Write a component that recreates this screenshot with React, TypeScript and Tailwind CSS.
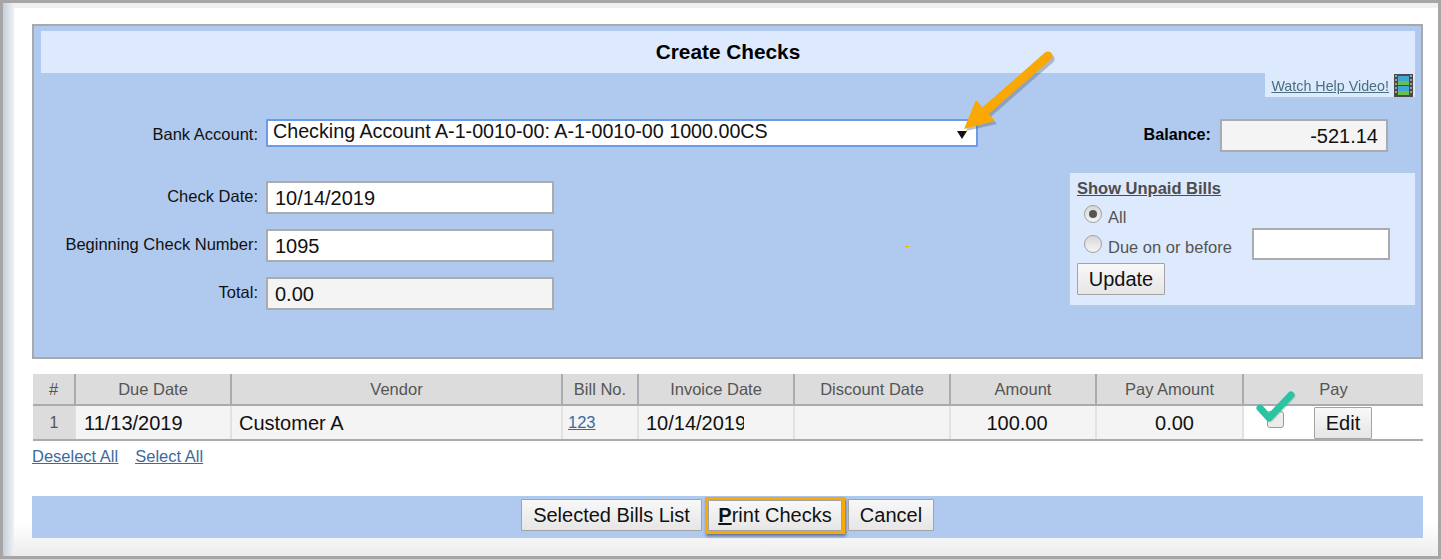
const columns = ['#', 'Due Date', 'Vendor', 'Bill No.', 'Invoice Date', 'Discount Date', 'Amount', 'Pay Amount', 'Pay'];

function Field({ label, value, muted }: { label: string; value: string; muted?: boolean }) {
  return (
    <div className="flex items-center">
      <div className="w-[224px] pb-[3px] text-right text-[16.5px] text-[#111]">{label}</div>
      <div
        className={`ml-[8px] flex h-[33px] w-[288px] items-center border-2 border-[#a9abae] pl-[7px] text-[20px] text-[#111] ${
          muted ? 'bg-[#f4f4f4]' : 'bg-white'
        }`}
      >
        {value}
      </div>
    </div>
  );
}

function Btn({ children, className = '' }: { children: React.ReactNode; className?: string }) {
  return (
    <button
      className={`flex items-center justify-center rounded-[1px] border border-[#a3a3a3] bg-gradient-to-b from-[#f8f8f8] to-[#e6e6e6] text-[20px] text-[#111] ${className}`}
    >
      {children}
    </button>
  );
}

function Radio({ checked }: { checked?: boolean }) {
  return (
    <span className="flex h-[18px] w-[18px] shrink-0 items-center justify-center rounded-full border border-[#a0a0a0] bg-gradient-to-b from-[#d8d8d8] to-[#f4f4f4]">
      {checked && <span className="h-[8px] w-[8px] rounded-full bg-[#555]" />}
    </span>
  );
}

function Overlays() {
  return (
    <>
      {/* orange arrow pointing at the dropdown */}
      <svg className="pointer-events-none absolute left-0 top-0" width="1441" height="559" viewBox="0 0 1441 559" fill="none">
        <g opacity="0.35" transform="translate(2 3)">
          <path d="M1048 56 L984 112" stroke="#4a5a70" strokeWidth="9" strokeLinecap="round" />
          <path d="M964 128 L976 100 L995 121 Z" fill="#4a5a70" />
        </g>
        <path d="M1048 56 L984 112" stroke="#f9a806" strokeWidth="9" strokeLinecap="round" />
        <path d="M964 129 L976 100 L995 121 Z" fill="#f9a806" />
        {/* green tick over the pay checkbox */}
        <path d="M1260 408 L1269 418 L1291 395" stroke="#8a9a96" strokeWidth="7" strokeLinecap="round" strokeLinejoin="round" opacity="0.35" transform="translate(1 1)" />
        <path d="M1260 408 L1269 418 L1291 395" stroke="#2cc3a0" strokeWidth="7" strokeLinecap="round" strokeLinejoin="round" />
      </svg>
      <div className="absolute left-[905px] top-[246px] h-[1px] w-[4px] bg-[#f9a806]" />
    </>
  );
}

export default function App() {
  return (
    <div className="relative flex h-[559px] w-[1441px] border-[3px] border-[#a6a6a6] bg-white font-['Liberation_Sans',Arial,sans-serif]">
      <div className="w-[11px] bg-gradient-to-r from-[#c6d0da] to-[#eef1f4]" />
      <div className="flex flex-1 flex-col bg-gradient-to-b from-white from-[94%] to-[#ececec]">
        <div className="h-[5px] bg-[#f0f0f0]" />
        <div className="pl-[18px] pt-[16px]">
          {/* top panel */}
          <div className="h-[335px] w-[1391px] border-2 border-[#a6a9ad] bg-[#b0c9ee] pt-[5px]">
            <div className="ml-[7px] mr-[6px] flex h-[42px] items-center justify-center bg-[#dde9fd] pb-[1px] text-[20.8px] font-bold text-black">
              Create Checks
            </div>
            <div className="mr-[6px] ml-auto flex h-[24px] w-[150px] items-center justify-end gap-[5px] bg-[#dde9fd] pr-[2px]">
              <a className="pt-[3px] text-[14.3px] text-[#49707c] underline blur-[0.5px]">Watch Help Video!</a>
              <svg width="19" height="23" viewBox="0 0 19 23">
                <rect width="19" height="23" fill="#4a4a48" />
                <rect x="4" y="2" width="11" height="9" fill="#3fa7d8" />
                <rect x="4" y="7" width="11" height="4" fill="#6cc04a" />
                <rect x="4" y="12" width="11" height="9" fill="#3fa7d8" />
                <rect x="4" y="17" width="11" height="4" fill="#6cc04a" />
                <path d="M1 2h2M1 6h2M1 10h2M1 14h2M1 18h2M16 2h2M16 6h2M16 10h2M16 14h2M16 18h2" stroke="#b8b8b4" strokeWidth="1.5" />
              </svg>
            </div>

            <div className="flex">
              <div className="w-[944px] pt-[22px]">
                <div className="flex items-center">
                  <div className="w-[224px] pt-[3px] text-right text-[16.5px] text-[#111]">Bank Account:</div>
                  <div className="ml-[8px] flex h-[28px] w-[712px] items-center justify-between rounded-[1px] border-2 border-[#6b9bea] bg-white pl-[5px] pr-[9px] text-[19.7px] text-[#111]">
                    <span className="-mt-[2px]">Checking Account A-1-0010-00: A-1-0010-00 1000.00CS</span>
                    <svg width="10" height="8" viewBox="0 0 10 8" className="mt-[3px]">
                      <path d="M0 0 H10 L5 8 Z" fill="#111" />
                    </svg>
                  </div>
                </div>
                <div className="mt-[34px] flex flex-col gap-[15px]">
                  <Field label="Check Date:" value="10/14/2019" />
                  <Field label="Beginning Check Number:" value="1095" />
                  <Field label="Total:" value="0.00" muted />
                </div>
              </div>

              <div className="ml-[92px] w-[345px] pt-[22px]">
                <div className="flex items-center justify-end pr-[27px]">
                  <span className="mr-[9px] pb-[2px] text-[16.2px] font-bold text-black">Balance:</span>
                  <div className="flex h-[33px] w-[168px] items-center justify-end border-2 border-[#a9abae] bg-[#f4f4f4] pr-[8px] pt-[1px] text-[20px] text-[#111]">
                    -521.14
                  </div>
                </div>
                <div className="mt-[21px] h-[132px] bg-[#dde9fd] pl-[7px] pt-[6px]">
                  <div className="text-[16.5px] font-bold leading-[18px] text-[#4d4d4d] underline">Show Unpaid Bills</div>
                  <div className="mt-[8px] flex h-[23px] items-start gap-[6px] pl-[7px] text-[16.5px] leading-[24px] text-[#555]">
                    <Radio checked />
                    <span>All</span>
                  </div>
                  <div className="flex items-start pl-[7px] text-[16.5px] leading-[24px] text-[#555]">
                    <span className="mt-[7px]">
                      <Radio />
                    </span>
                    <span className="ml-[6px] mt-[7px]">Due on or before</span>
                    <div className="ml-[20px] h-[32px] w-[138px] border-2 border-[#a9abae] bg-white" />
                  </div>
                  <Btn className="mt-[3px] h-[32px] w-[88px]">Update</Btn>
                </div>
              </div>
            </div>
          </div>

          {/* bills table */}
          <div className="ml-[1px] mt-[15px] w-[1390px] border-b-2 border-[#a9acaf]">
            <div className="grid grid-cols-[43px_156px_331px_76px_156px_156px_146px_147px_179px] border-b-2 border-[#a9acaf]">
              {columns.map((c) => (
                <div
                  key={c}
                  className="flex h-[30px] items-center justify-center border-r-2 border-[#a9acaf] bg-[#dcdcdc] pt-[1px] text-[16.5px] text-[#555] last:border-r-0"
                >
                  {c}
                </div>
              ))}
            </div>
            <div className="grid h-[33px] grid-cols-[43px_156px_331px_76px_156px_156px_146px_147px_179px] text-[20px] text-[#111]">
              <div className="flex items-center justify-center border-r border-[#e2e2e2] bg-[#dcdcdc] text-[16px] text-[#555]">1</div>
              <div className="flex items-center border-r-2 border-[#e2e2e2] bg-[#f4f4f4] pl-[8px] pt-[1px]">11/13/2019</div>
              <div className="flex items-center border-r-2 border-[#e2e2e2] bg-[#f4f4f4] pl-[7px] pt-[1px]">Customer A</div>
              <div className="flex items-center border-r-2 border-[#e2e2e2] bg-[#f4f4f4] pl-[5px] text-[16.5px] text-[#3b6aa0] underline">123</div>
              <div className="flex items-center overflow-hidden border-r-2 border-[#e2e2e2] bg-[#f4f4f4] pl-[7px] pt-[1px]">
                <span className="w-[98px] shrink-0 overflow-hidden whitespace-nowrap">10/14/2019</span>
              </div>
              <div className="border-r-2 border-[#e2e2e2] bg-[#f4f4f4]" />
              <div className="flex items-center justify-center border-r-2 border-[#e2e2e2] bg-[#f4f4f4] pr-[12px] pt-[1px]">100.00</div>
              <div className="flex items-center justify-center border-r-2 border-[#e2e2e2] bg-[#f4f4f4] pl-[10px] pt-[1px]">0.00</div>
              <div className="flex items-center bg-white pl-[23px]">
                <span className="-mt-[6px] h-[17px] w-[17px] rounded-[3px] border border-[#9a9a9a] bg-[#ececec]" />
                <Btn className="ml-[30px] h-[32px] w-[58px]">Edit</Btn>
              </div>
            </div>
          </div>

          <div className="mt-[3px] flex gap-[17px] text-[16.5px] text-[#3b6aa0] underline">
            <a>Deselect All</a>
            <a>Select All</a>
          </div>

          {/* footer bar */}
          <div className="mt-[27px] flex h-[42px] w-[1391px] items-start justify-center bg-[#b0c9ee] pt-[1px]">
            <div className="flex items-center">
              <Btn className="h-[32px] w-[181px]">Selected Bills List</Btn>
              <div className="ml-[3px] border-[3px] border-[#f9a806] shadow-[1px_2px_3px_#5a6f90]">
                <Btn className="h-[31px] w-[134px]">
                  <span>
                    <b className="underline">P</b>rint Checks
                  </span>
                </Btn>
              </div>
              <Btn className="ml-[3px] h-[32px] w-[86px]">Cancel</Btn>
            </div>
          </div>
        </div>
      </div>
      <div className="pointer-events-none absolute -left-[3px] -top-[3px] h-[559px] w-[1441px]">
        <Overlays />
      </div>
    </div>
  );
}
